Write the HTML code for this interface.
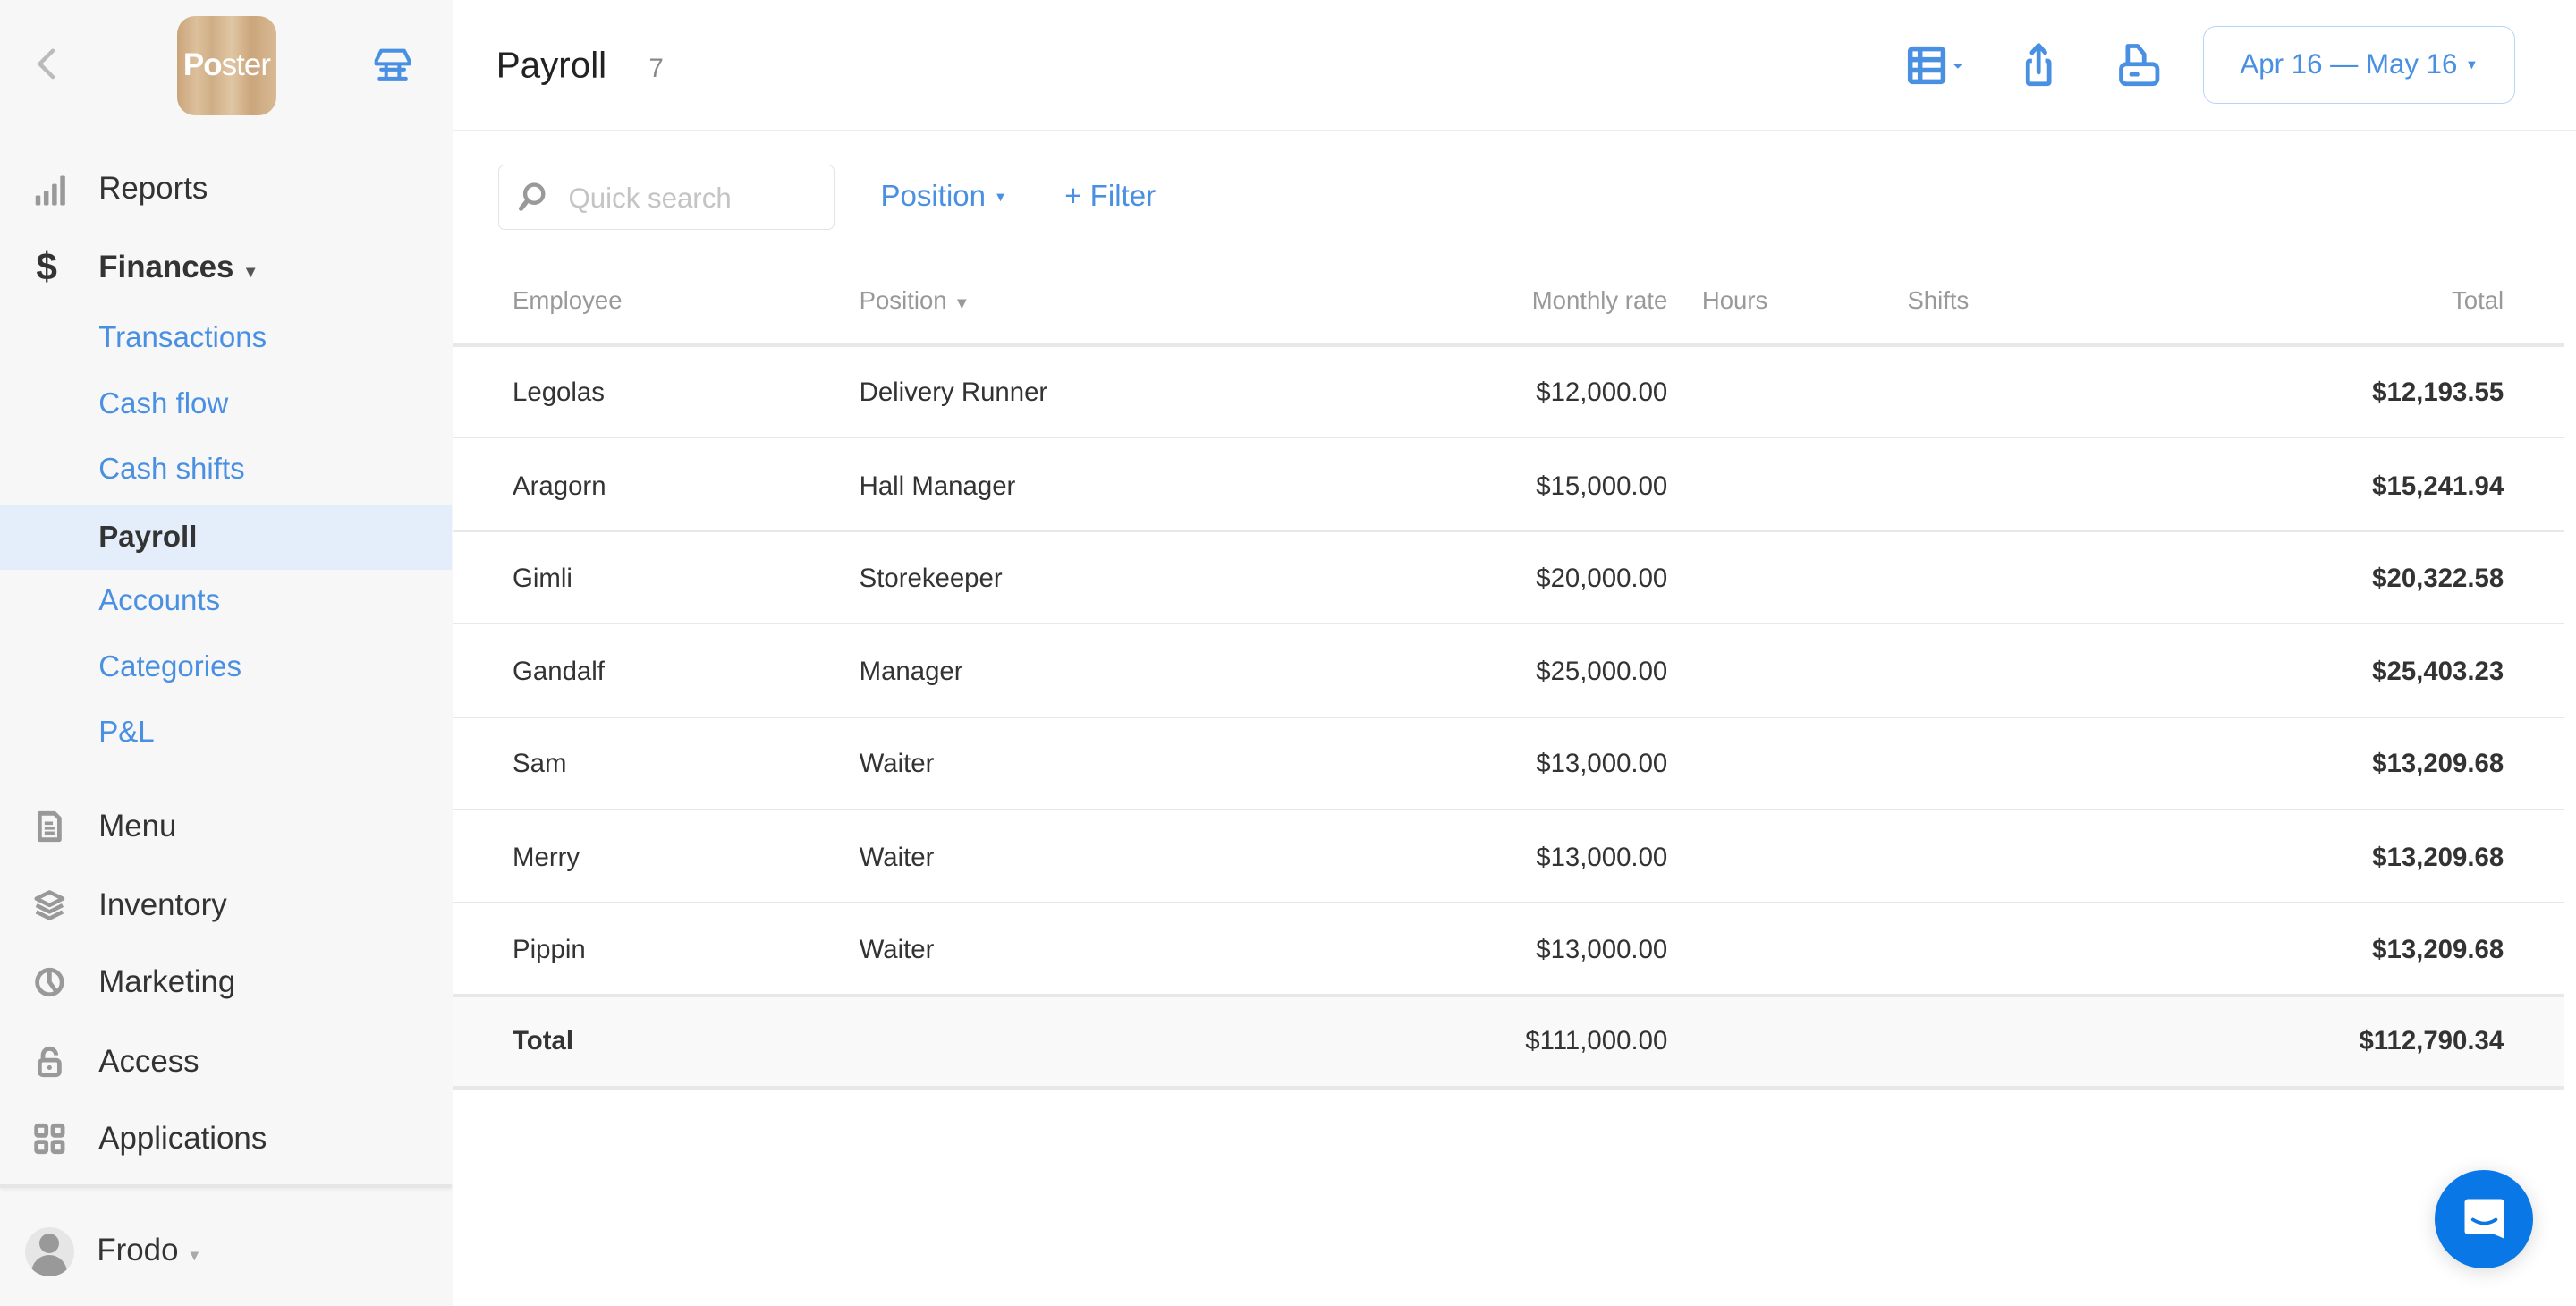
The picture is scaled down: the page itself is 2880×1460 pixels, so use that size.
<!DOCTYPE html>
<html><head><meta charset="utf-8"><style>
*{box-sizing:border-box;margin:0;padding:0}
html,body{width:2880px;height:1460px;overflow:hidden;background:#fff}
body{font-family:"Liberation Sans",Arial,sans-serif;color:#333}
#w{zoom:1.83673;width:1568px;height:795px;position:relative;overflow:hidden;background:#fff}
.abs{position:absolute}
#side{left:0;top:0;width:276px;height:795px;background:#f7f7f7;border-right:1px solid #e3e3e3}
#side .hd{position:absolute;left:0;top:0;width:275px;height:80px;border-bottom:1px solid #e3e3e3}
.logo{left:108px;top:10px;width:60px;height:60px;border-radius:11px;background:linear-gradient(90deg,#caa47a,#dcc09c 20%,#cfae86 35%,#e0c6a4 55%,#cba57b 75%,#d8ba94);color:#fff;font-size:19px;line-height:60px;text-align:center;letter-spacing:-.5px}
.nav{position:absolute;left:60px;font-size:19px;color:#333;transform:translateY(-50%)}
.b{font-weight:bold}
.sub{position:absolute;left:60px;font-size:18px;color:#4a90e2;transform:translateY(-50%)}
.ic{position:absolute;left:20px;width:20px;height:20px;transform:translateY(-50%)}
.t{position:absolute;font-size:16px;transform:translateY(-50%);white-space:nowrap}
.r{text-align:right}
.hl{position:absolute;left:276px;width:1285px;height:1px;background:#e8e8e8}
.th{color:#999;font-size:15px}
</style></head><body><div id="w">
<div id="side" class="abs">
 <div class="hd"></div>
 <svg class="abs" style="left:20px;top:29px" width="16" height="20" viewBox="0 0 16 20"><path d="M12 2 L4 10 L12 18" fill="none" stroke="#bbb" stroke-width="2.4" stroke-linecap="round"/></svg>
 <div class="abs logo"><b>Po</b>ster</div>
 <svg class="abs" style="left:227px;top:29px" width="24" height="22" viewBox="0 0 24 22"><path d="M5 2 H19 L22 8 V10 H2 V8 Z M8 10 V18 M16 10 V18 M5 13.5 H19 M4 19 H20" fill="none" stroke="#4a90e2" stroke-width="2.2" stroke-linejoin="round" stroke-linecap="round"/></svg>
 <svg class="ic" style="top:116px" viewBox="0 0 20 20"><rect x="1.5" y="13" width="3" height="6" rx=".8" fill="#999"/><rect x="6.5" y="10" width="3" height="9" rx=".8" fill="#999"/><rect x="11.5" y="6" width="3" height="13" rx=".8" fill="#999"/><rect x="16.5" y="1" width="3" height="18" rx=".8" fill="#999"/></svg>
 <div class="nav" style="top:115px">Reports</div>
 <div class="ic" style="top:163px;font-size:23px;font-weight:bold;color:#333;line-height:20px;left:22px">$</div>
 <div class="nav b" style="top:163px">Finances <span style="font-size:10px;color:#555">▼</span></div>
 <div class="sub" style="top:206px">Transactions</div>
 <div class="sub" style="top:246px">Cash flow</div>
 <div class="sub" style="top:286px">Cash shifts</div>
 <div class="abs" style="left:0;top:307px;width:275px;height:40px;background:#e4eefa"></div>
 <div class="nav b" style="top:327px;font-size:18px">Payroll</div>
 <div class="sub" style="top:366px">Accounts</div>
 <div class="sub" style="top:406px">Categories</div>
 <div class="sub" style="top:446px">P&amp;L</div>
 <svg class="ic" style="top:503px" viewBox="0 0 20 20"><path d="M4 2 H13 L16 5 V18 H4 Z" fill="none" stroke="#999" stroke-width="2.6" stroke-linejoin="round"/><path d="M7 8 H12 M7 11 H13 M7 14 H13" stroke="#999" stroke-width="2"/></svg>
 <div class="nav" style="top:503px">Menu</div>
 <svg class="ic" style="top:551px" viewBox="0 0 20 20"><path d="M10 2 L18 6 L10 10 L2 6 Z" fill="none" stroke="#999" stroke-width="2.4" stroke-linejoin="round"/><path d="M2 10 L10 14 L18 10 M2 14 L10 18 L18 14" fill="none" stroke="#999" stroke-width="2.4" stroke-linejoin="round"/></svg>
 <div class="nav" style="top:551px">Inventory</div>
 <svg class="ic" style="top:598px" viewBox="0 0 20 20"><circle cx="10" cy="10" r="7.5" fill="none" stroke="#999" stroke-width="2.6"/><path d="M10 2.5 V10 L15 17" fill="none" stroke="#999" stroke-width="2.6"/></svg>
 <div class="nav" style="top:598px">Marketing</div>
 <svg class="ic" style="top:646px" viewBox="0 0 20 20"><path d="M6 9 V6 A4 4 0 0 1 14 6" fill="none" stroke="#999" stroke-width="2.6"/><rect x="4" y="9" width="12" height="9" rx="2" fill="none" stroke="#999" stroke-width="2.6"/><circle cx="10" cy="13.5" r="1.4" fill="#999"/></svg>
 <div class="nav" style="top:646px">Access</div>
 <svg class="ic" style="top:693px" viewBox="0 0 20 20"><rect x="2" y="2" width="6" height="6" rx="1" fill="none" stroke="#999" stroke-width="2.6"/><rect x="12" y="2" width="6" height="6" rx="1" fill="none" stroke="#999" stroke-width="2.6"/><rect x="2" y="12" width="6" height="6" rx="1" fill="none" stroke="#999" stroke-width="2.6"/><rect x="12" y="12" width="6" height="6" rx="1" fill="none" stroke="#999" stroke-width="2.6"/></svg>
 <div class="nav" style="top:693px">Applications</div>
 <div class="abs" style="left:0;top:721px;width:275px;height:2px;background:#e6e6e6;box-shadow:0 1px 2px rgba(0,0,0,.06)"></div>
 <div class="abs" style="left:15px;top:747px;width:30px;height:30px;border-radius:50%;background:#e6e6e6;overflow:hidden"><div class="abs" style="left:9px;top:4px;width:12px;height:12px;border-radius:50%;background:#999"></div><div class="abs" style="left:4px;top:17px;width:22px;height:16px;border-radius:11px 11px 0 0;background:#999"></div></div>
 <div class="nav" style="top:761px;left:59px">Frodo <span style="font-size:9px;color:#aaa">▼</span></div>
</div>

<div class="t" style="left:302px;top:40px;font-size:22px;color:#222">Payroll</div>
<div class="t" style="left:395px;top:42px;font-size:16px;color:#888">7</div>
<div class="abs" style="left:276px;top:79px;width:1292px;height:1px;background:#ececec"></div>
<svg class="abs" style="left:1161px;top:28px" width="40" height="24" viewBox="0 0 40 24"><rect x="2" y="2" width="20" height="20" rx="1.5" fill="none" stroke="#4a90e2" stroke-width="3"/><path d="M2 8.5 H22 M2 15 H22 M8 2 V22" stroke="#4a90e2" stroke-width="3"/><path d="M28 11 H34 L31 14 Z" fill="#4a90e2"/></svg>
<svg class="abs" style="left:1230px;top:25px" width="22" height="30" viewBox="0 0 22 30"><path d="M11 3 V19 M7 7 L11 2.5 L15 7" fill="none" stroke="#4a90e2" stroke-width="2.6" stroke-linecap="round" stroke-linejoin="round"/><path d="M7 12 H5.5 A1 1 0 0 0 4.5 13 V25 A1 1 0 0 0 5.5 26 H16.5 A1 1 0 0 0 17.5 25 V13 A1 1 0 0 0 16.5 12 H15" fill="none" stroke="#4a90e2" stroke-width="2.6"/></svg>
<svg class="abs" style="left:1288px;top:25px" width="28" height="30" viewBox="0 0 28 30"><path d="M7 14 V3 H13 L17 8 V14" fill="none" stroke="#4a90e2" stroke-width="2.6" stroke-linejoin="round"/><rect x="3" y="14" width="22" height="12" rx="3" fill="none" stroke="#4a90e2" stroke-width="2.6"/><rect x="8" y="19" width="6" height="2.5" rx="1" fill="#4a90e2"/></svg>
<div class="abs" style="left:1341px;top:16px;width:190px;height:47px;border:1px solid #b5d4f7;border-radius:8px;color:#4a90e2;font-size:17px;line-height:46px;text-align:center">Apr 16 — May 16 <span style="font-size:8px;position:relative;top:-3px">▼</span></div>

<div class="abs" style="left:303px;top:100px;width:205px;height:40px;border:1px solid #e3e3e3;border-radius:4px"></div>
<svg class="abs" style="left:314px;top:110px" width="20" height="20" viewBox="0 0 20 20"><circle cx="11" cy="8" r="5.5" fill="none" stroke="#999" stroke-width="2.4"/><path d="M7 12 L3 17" stroke="#999" stroke-width="2.8" stroke-linecap="round"/></svg>
<div class="t" style="left:346px;top:121px;font-size:17px;color:#c4c4c4">Quick search</div>
<div class="t" style="left:536px;top:120px;font-size:18px;color:#4a90e2">Position <span style="font-size:8px;position:relative;top:-3px">▼</span></div>
<div class="t" style="left:648px;top:120px;font-size:18px;color:#4a90e2">+ Filter</div>

<div class="t th" style="left:312px;top:183px">Employee</div>
<div class="t th" style="left:523px;top:183px">Position <span style="font-size:10px">▼</span></div>
<div class="t th r" style="right:553px;top:183px">Monthly rate</div>
<div class="t th" style="left:1036px;top:183px">Hours</div>
<div class="t th" style="left:1161px;top:183px">Shifts</div>
<div class="t th r" style="right:44px;top:183px">Total</div>
<div class="hl" style="top:209px;height:2px"></div>

<div class="abs" style="left:276px;top:606px;width:1285px;height:56px;background:#f9f9f9"></div>
<div class="hl" style="top:266px"></div><div class="hl" style="top:323px"></div><div class="hl" style="top:379px"></div><div class="hl" style="top:436px"></div><div class="hl" style="top:492px"></div><div class="hl" style="top:549px"></div><div class="hl" style="top:605px;height:2px"></div><div class="hl" style="top:661px;height:2px"></div>

<div class="t" style="left:312px;top:239px">Legolas</div><div class="t" style="left:523px;top:239px">Delivery Runner</div><div class="t r" style="right:553px;top:239px">$12,000.00</div><div class="t r b" style="right:44px;top:239px">$12,193.55</div>
<div class="t" style="left:312px;top:296px">Aragorn</div><div class="t" style="left:523px;top:296px">Hall Manager</div><div class="t r" style="right:553px;top:296px">$15,000.00</div><div class="t r b" style="right:44px;top:296px">$15,241.94</div>
<div class="t" style="left:312px;top:352px">Gimli</div><div class="t" style="left:523px;top:352px">Storekeeper</div><div class="t r" style="right:553px;top:352px">$20,000.00</div><div class="t r b" style="right:44px;top:352px">$20,322.58</div>
<div class="t" style="left:312px;top:409px">Gandalf</div><div class="t" style="left:523px;top:409px">Manager</div><div class="t r" style="right:553px;top:409px">$25,000.00</div><div class="t r b" style="right:44px;top:409px">$25,403.23</div>
<div class="t" style="left:312px;top:465px">Sam</div><div class="t" style="left:523px;top:465px">Waiter</div><div class="t r" style="right:553px;top:465px">$13,000.00</div><div class="t r b" style="right:44px;top:465px">$13,209.68</div>
<div class="t" style="left:312px;top:522px">Merry</div><div class="t" style="left:523px;top:522px">Waiter</div><div class="t r" style="right:553px;top:522px">$13,000.00</div><div class="t r b" style="right:44px;top:522px">$13,209.68</div>
<div class="t" style="left:312px;top:578px">Pippin</div><div class="t" style="left:523px;top:578px">Waiter</div><div class="t r" style="right:553px;top:578px">$13,000.00</div><div class="t r b" style="right:44px;top:578px">$13,209.68</div>
<div class="t b" style="left:312px;top:634px">Total</div><div class="t r" style="right:553px;top:634px">$111,000.00</div><div class="t r b" style="right:44px;top:634px">$112,790.34</div>

<div class="abs" style="left:1482px;top:712px;width:60px;height:60px;border-radius:50%;background:#0a77e6;box-shadow:0 2px 12px rgba(0,0,0,.15)"></div>
<svg class="abs" style="left:1497px;top:727px" width="30" height="30" viewBox="0 0 30 30"><path d="M5 3 H25 A2 2 0 0 1 27 5 V27 L21 24.5 H5 A2 2 0 0 1 3 22.5 V5 A2 2 0 0 1 5 3 Z" fill="#fff"/><path d="M8 15.5 Q15 20 22 15.5" fill="none" stroke="#0a77e6" stroke-width="2" stroke-linecap="round"/></svg>
</div></body></html>
